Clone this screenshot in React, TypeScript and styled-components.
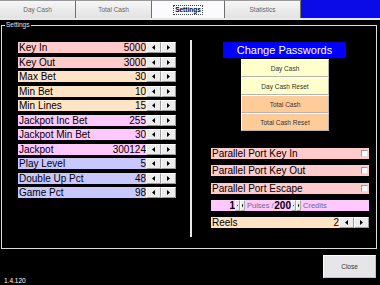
import styled, { createGlobalStyle } from 'styled-components';

const GlobalStyle = createGlobalStyle`
  html, body {
    margin: 0;
    padding: 0;
    background: #000;
  }
  body {
    font-family: "Liberation Sans", Arial, sans-serif;
  }
`;

const Screen = styled.div`
  width: 380px;
  height: 285px;
  overflow: hidden;
  display: flex;
  flex-direction: column;
  background: #000;
`;

const TabBar = styled.div`
  display: flex;
  height: 18px;
`;

const Tab = styled.div<{ $w: number; $active?: boolean }>`
  width: ${p => p.$w}px;
  box-sizing: border-box;
  display: flex;
  align-items: center;
  justify-content: center;
  font-size: 6.5px;
  font-weight: ${p => (p.$active ? 700 : 400)};
  color: ${p => (p.$active ? '#000' : '#666')};
  background: ${p => (p.$active ? '#fbfbfd' : 'linear-gradient(#f6f6f6, #e2e2e2)')};
  border-right: 1px solid #6f6f6f;
  border-top: 1px solid #9a9a9a;
`;

const TabFocus = styled.span`
  border: 1px dotted #444;
  padding: 0 1px;
  line-height: 8px;
`;

const TabFiller = styled.div`
  flex: 1;
  background: #0b0be8;
`;

const PageLine = styled.div`
  height: 2px;
  background: #e8e8e8;
`;

const GroupBox = styled.div`
  position: relative;
  margin: 5px 3px 0 1px;
  height: 222px;
  border: 1px solid #dcdcdc;
  display: flex;
`;

const Legend = styled.span`
  position: absolute;
  top: -5px;
  left: 3px;
  padding: 0 1px;
  background: #000;
  color: #e0e0e0;
  font-size: 6.5px;
  line-height: 8px;
`;

const LeftCol = styled.div`
  width: 172px;
  padding: 16px 0 0 16px;
  display: flex;
  flex-direction: column;
  gap: 3.5px;
`;

const Divider = styled.div`
  width: 2px;
  height: 197px;
  margin-top: 14px;
  background: #e8e8e8;
`;

const RightCol = styled.div`
  display: flex;
  flex-direction: column;
  padding: 16px 0 0 19px;
`;

const Row = styled.div`
  display: flex;
  width: 158px;
  height: 11px;
`;

const Field = styled.div<{ $bg: string }>`
  flex: 1;
  display: flex;
  align-items: center;
  padding: 0 0 0 1px;
  background: ${p => p.$bg};
  font-size: 10px;
  line-height: 11px;
  color: #000;
  white-space: nowrap;
`;

const Label = styled.span`
  flex: 1;
`;

const SpinBtn = styled.div`
  width: 15px;
  height: 11px;
  box-sizing: border-box;
  display: flex;
  align-items: center;
  justify-content: center;
  background: #ececec;
  border: 1px solid;
  border-color: #fff #9c9c9c #9c9c9c #fff;
`;

const PwTitle = styled.div`
  margin-left: 12px;
  width: 123px;
  height: 16px;
  display: flex;
  align-items: center;
  justify-content: center;
  background: #0000ff;
  color: #fff;
  font-size: 11px;
`;

const PwList = styled.div`
  margin: 1px 0 0 30px;
  width: 88px;
  display: flex;
  flex-direction: column;
`;

const PwButton = styled.div<{ $bg: string }>`
  height: 18px;
  box-sizing: border-box;
  display: flex;
  align-items: center;
  justify-content: center;
  background: ${p => p.$bg};
  border: 1px solid;
  border-color: #fff #b4b4b4 #b4b4b4 #fff;
  font-size: 6.5px;
  color: #333;
`;

const OptList = styled.div`
  margin-top: 17px;
  display: flex;
  flex-direction: column;
  gap: 6.25px;
`;

const Check = styled.span`
  width: 7px;
  height: 7px;
  box-sizing: border-box;
  background: #fff;
  border: 1px solid;
  border-color: #9a9a9a #e0e0e0 #e0e0e0 #9a9a9a;
  margin-right: 1px;
`;

const PulseNum = styled.span<{ $w: number }>`
  width: ${p => p.$w}px;
  text-align: right;
  font-size: 10px;
  font-weight: 700;
`;

const TinySpin = styled.span`
  display: flex;
  width: 10px;
  height: 11px;
`;

const TinyBtn = styled.span`
  flex: 1;
  box-sizing: border-box;
  display: flex;
  align-items: center;
  justify-content: center;
  background: #eaeaea;
  border: 1px solid;
  border-color: #fff #a8a8a8 #a8a8a8 #fff;
`;

const PulseText = styled.span<{ $w?: number }>`
  width: ${p => (p.$w ? `${p.$w}px` : 'auto')};
  padding-left: 2px;
  font-size: 7.5px;
  color: #6c6c8c;
`;

const Footer = styled.div`
  flex: 1;
  display: flex;
  justify-content: space-between;
  padding: 6px 4px 0 4px;
`;

const Version = styled.span`
  margin-top: 22px;
  color: #fff;
  font-size: 6.5px;
  line-height: 8px;
`;

const CloseBtn = styled.div`
  width: 53px;
  height: 23px;
  box-sizing: border-box;
  display: flex;
  align-items: center;
  justify-content: center;
  background: #e6e6ea;
  border: 1px solid;
  border-color: #fff #c0c0c0 #c0c0c0 #fff;
  font-size: 6.5px;
  color: #333;
`;

const Arrow = ({ dir, size = 5 }: { dir: 'l' | 'r'; size?: number }) => (
  <svg width={size * 0.6} height={size} viewBox="0 0 3 5">
    <polygon points={dir === 'l' ? '3,0 0,2.5 3,5' : '0,0 3,2.5 0,5'} fill="#000" />
  </svg>
);

const PINK = '#ffcaca';
const PEACH = '#ffe3c6';
const VIOLET = '#ffc8ff';
const LAVENDER = '#c8c8ff';

const settings = [
  { label: 'Key In', value: '5000', bg: PINK },
  { label: 'Key Out', value: '3000', bg: PINK },
  { label: 'Max Bet', value: '30', bg: PEACH },
  { label: 'Min Bet', value: '10', bg: PEACH },
  { label: 'Min Lines', value: '15', bg: PEACH },
  { label: 'Jackpot Inc Bet', value: '255', bg: VIOLET },
  { label: 'Jackpot Min Bet', value: '30', bg: VIOLET },
  { label: 'Jackpot', value: '300124', bg: VIOLET },
  { label: 'Play Level', value: '5', bg: LAVENDER },
  { label: 'Double Up Pct', value: '48', bg: LAVENDER },
  { label: 'Game Pct', value: '98', bg: LAVENDER },
];

const passwords = [
  { label: 'Day Cash', bg: '#ffffcc' },
  { label: 'Day Cash Reset', bg: '#ffffcc' },
  { label: 'Total Cash', bg: '#ffcc99' },
  { label: 'Total Cash Reset', bg: '#ffcc99' },
];

const ports = ['Parallel Port Key In', 'Parallel Port Key Out', 'Parallel Port Escape'];

const SpinRow = ({ label, value, bg }: { label: string; value: string; bg: string }) => (
  <Row>
    <Field $bg={bg}>
      <Label>{label}</Label>
      <span>{value}</span>
    </Field>
    <SpinBtn>
      <Arrow dir="l" />
    </SpinBtn>
    <SpinBtn>
      <Arrow dir="r" />
    </SpinBtn>
  </Row>
);

const Tiny = () => (
  <TinySpin>
    <TinyBtn>
      <Arrow dir="l" size={3} />
    </TinyBtn>
    <TinyBtn>
      <Arrow dir="r" size={3} />
    </TinyBtn>
  </TinySpin>
);

export default function App() {
  return (
    <Screen>
      <GlobalStyle />
      <TabBar>
        <Tab $w={76}>Day Cash</Tab>
        <Tab $w={76}>Total Cash</Tab>
        <Tab $w={73} $active>
          <TabFocus>Settings</TabFocus>
        </Tab>
        <Tab $w={76}>Statistics</Tab>
        <TabFiller />
      </TabBar>
      <PageLine />
      <GroupBox>
        <Legend>Settings</Legend>
        <LeftCol>
          {settings.map(s => (
            <SpinRow key={s.label} {...s} />
          ))}
        </LeftCol>
        <Divider />
        <RightCol>
          <PwTitle>Change Passwords</PwTitle>
          <PwList>
            {passwords.map(p => (
              <PwButton key={p.label} $bg={p.bg}>
                {p.label}
              </PwButton>
            ))}
          </PwList>
          <OptList>
            {ports.map(p => (
              <Row key={p}>
                <Field $bg={PINK}>
                  <Label>{p}</Label>
                  <Check />
                </Field>
              </Row>
            ))}
            <Row>
              <Field $bg={VIOLET}>
                <PulseNum $w={23}>1</PulseNum>
                <Tiny />
                <PulseText $w={26}>Pulses /</PulseText>
                <PulseNum $w={18}>200</PulseNum>
                <Tiny />
                <PulseText>Credits</PulseText>
              </Field>
            </Row>
            <SpinRow label="Reels" value="2" bg={PEACH} />
          </OptList>
        </RightCol>
      </GroupBox>
      <Footer>
        <Version>1.4.120</Version>
        <CloseBtn>Close</CloseBtn>
      </Footer>
    </Screen>
  );
}
